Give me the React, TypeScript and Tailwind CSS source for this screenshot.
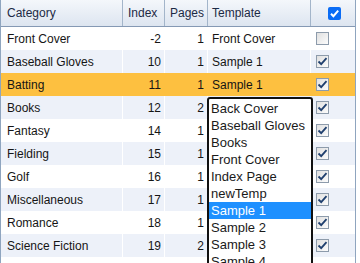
import React from 'react';

const rows = [
  { cat: 'Front Cover', index: -2, pages: 1, tpl: 'Front Cover', on: false },
  { cat: 'Baseball Gloves', index: 10, pages: 1, tpl: 'Sample 1', on: true },
  { cat: 'Batting', index: 11, pages: 1, tpl: 'Sample 1', on: true },
  { cat: 'Books', index: 12, pages: 2, tpl: '', on: true },
  { cat: 'Fantasy', index: 14, pages: 1, tpl: '', on: true },
  { cat: 'Fielding', index: 15, pages: 1, tpl: '', on: true },
  { cat: 'Golf', index: 16, pages: 1, tpl: '', on: true },
  { cat: 'Miscellaneous', index: 17, pages: 1, tpl: '', on: true },
  { cat: 'Romance', index: 18, pages: 1, tpl: '', on: true },
  { cat: 'Science Fiction', index: 19, pages: 2, tpl: '', on: true },
];

const options = ['Back Cover', 'Baseball Gloves', 'Books', 'Front Cover', 'Index Page', 'newTemp', 'Sample 1', 'Sample 2', 'Sample 3', 'Sample 4'];

function RowCheck({ on }: { on: boolean }) {
  return (
    <div className="w-[13px] h-[13px] border border-[#8d9bab] bg-gradient-to-br from-[#e0e0e0] to-[#fcfcfc] flex items-center justify-center">
      {on && (
        <svg width="11" height="11" viewBox="0 0 11 11">
          <path d="M1.5 5.5 L4.2 8.2 L9.5 2.2" fill="none" stroke="#1f3f6e" strokeWidth="1.8" />
        </svg>
      )}
    </div>
  );
}

export default function App() {
  return (
    <div className="relative w-[360px] h-[263px] overflow-hidden bg-white text-[12px] text-[#151515]" style={{ fontFamily: '"Liberation Sans", Arial, sans-serif' }}>
      <div className="w-[356px] border-l border-r border-[#8fa5bf]">
        {/* header */}
        <div className="flex h-[27px] bg-gradient-to-b from-[#f4f7fb] to-[#dde5f0] border-b border-[#8599b4] text-[#1c2a45]">
          <div className="w-[122px] pl-[6px] flex items-center border-r border-[#a3b5ca]">Category</div>
          <div className="w-[42px] pl-[5px] flex items-center border-r border-[#a3b5ca]">Index</div>
          <div className="w-[43px] pl-[5px] flex items-center border-r border-[#a3b5ca]">Pages</div>
          <div className="w-[103px] pl-[4px] flex items-center border-r border-[#a3b5ca]">Template</div>
          <div className="flex-1 flex items-center justify-center pl-[2px]">
            <div className="w-[13px] h-[13px] rounded-[2px] bg-[#0a6cf5] flex items-center justify-center">
              <svg width="11" height="11" viewBox="0 0 11 11">
                <path d="M2 5.8 L4.4 8.2 L9.2 2.6" fill="none" stroke="#fff" strokeWidth="2" />
              </svg>
            </div>
          </div>
        </div>
        {rows.map((r, i) => {
          const hl = i === 2;
          const bg = hl ? 'bg-[#fdc040]' : i % 2 === 1 ? 'bg-[#edf1f9]' : 'bg-white';
          const sep = hl ? 'border-transparent' : 'border-white';
          return (
            <div key={r.cat} className={`flex h-[23px] ${bg}`}>
              <div className={`w-[122px] pl-[6px] flex items-center border-r ${sep}`}>{r.cat}</div>
              <div className={`w-[42px] pr-[3px] flex items-center justify-end border-r ${sep}`}>{r.index}</div>
              <div className={`w-[43px] pr-[3px] flex items-center justify-end border-r ${sep}`}>{r.pages}</div>
              <div className={`w-[103px] pl-[4px] flex items-center border-r ${sep}`}>{r.tpl}</div>
              <div className="flex-1 flex items-center pl-[5px]">
                <RowCheck on={r.on} />
              </div>
            </div>
          );
        })}
        <div className="h-[23px] bg-white" />
      </div>

      {/* open template list */}
      <div className="absolute left-[207px] top-[97px] w-[106px] h-[180px] bg-white border-2 border-[#111] rounded-[3px] text-[13px] text-[#1a1a1a] py-[1px]">
        {options.map((o) => (
          <div key={o} className={`h-[17px] leading-[17px] pl-[2px] ${o === 'Sample 1' ? 'bg-[#1e90ff] text-white' : ''}`}>{o}</div>
        ))}
      </div>
    </div>
  );
}
